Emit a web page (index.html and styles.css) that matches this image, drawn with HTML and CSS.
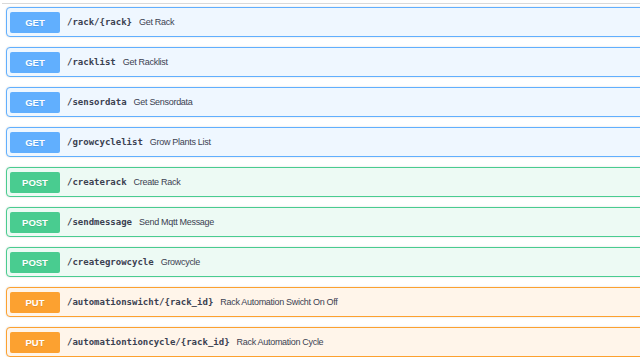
FILE: index.html
```html
<!DOCTYPE html>
<html lang="en">
<head>
  <meta charset="UTF-8">
  <title>API Operations</title>
  <link rel="stylesheet" href="styles.css">
</head>
<body>

  <div class="wrapper">
    <div class="section-line"></div>

    <div class="opblock get">
      <span class="method">GET</span>
      <span class="path">/rack/{rack}</span>
      <span class="summary">Get Rack</span>
    </div>

    <div class="opblock get">
      <span class="method">GET</span>
      <span class="path">/racklist</span>
      <span class="summary">Get Racklist</span>
    </div>

    <div class="opblock get">
      <span class="method">GET</span>
      <span class="path">/sensordata</span>
      <span class="summary">Get Sensordata</span>
    </div>

    <div class="opblock get">
      <span class="method">GET</span>
      <span class="path">/growcyclelist</span>
      <span class="summary">Grow Plants List</span>
    </div>

    <div class="opblock post">
      <span class="method">POST</span>
      <span class="path">/createrack</span>
      <span class="summary">Create Rack</span>
    </div>

    <div class="opblock post">
      <span class="method">POST</span>
      <span class="path">/sendmessage</span>
      <span class="summary">Send Mqtt Message</span>
    </div>

    <div class="opblock post">
      <span class="method">POST</span>
      <span class="path">/creategrowcycle</span>
      <span class="summary">Growcycle</span>
    </div>

    <div class="opblock put">
      <span class="method">PUT</span>
      <span class="path">/automationswicht/{rack_id}</span>
      <span class="summary">Rack Automation Swicht On Off</span>
    </div>

    <div class="opblock put">
      <span class="method">PUT</span>
      <span class="path">/automationtioncycle/{rack_id}</span>
      <span class="summary">Rack Automation Cycle</span>
    </div>
  </div>

</body>
</html>
```

FILE: styles.css
```css
* {
  margin: 0;
  padding: 0;
  box-sizing: border-box;
}

body {
  font-family: 'Liberation Sans', Arial, sans-serif;
  background: #fff;
  color: #3b4151;
  overflow: hidden;
}

.wrapper {
  padding: 3px 0 0 6px;
  display: flex;
  flex-direction: column;
  gap: 10px;
}

/* linha cinza do topo */
.section-line {
  height: 1px;
  background: #d9d9d9;
  margin: 0 0 -7px -4px;
}

.opblock {
  display: flex;
  align-items: center;
  height: 30px;
  margin-right: -10px;
  padding: 0 3px;
  border: 1px solid;
  border-radius: 4px;
  box-shadow: 0 0 2px rgba(0, 0, 0, 0.15);
}

.method {
  width: 50px;
  height: 21px;
  flex-shrink: 0;
  display: flex;
  align-items: center;
  justify-content: center;
  border-radius: 2px;
  color: #fff;
  font-size: 9.5px;
  font-weight: 700;
  text-shadow: 0 1px 0 rgba(0, 0, 0, 0.1);
}

.path {
  margin-left: 7px;
  font-family: 'DejaVu Sans Mono', monospace;
  font-size: 9px;
  font-weight: 700;
  color: #3b4151;
}

.summary {
  margin-left: 7px;
  font-size: 9px;
  letter-spacing: -0.3px;
  color: #3b4151;
}

.get {
  background: #eff7ff;
  border-color: #61affe;
}

.get .method {
  background: #61affe;
}

.post {
  background: #edfaf4;
  border-color: #49cc90;
}

.post .method {
  background: #49cc90;
}

.put {
  background: #fff5ea;
  border-color: #fca130;
}

.put .method {
  background: #fca130;
}
```
